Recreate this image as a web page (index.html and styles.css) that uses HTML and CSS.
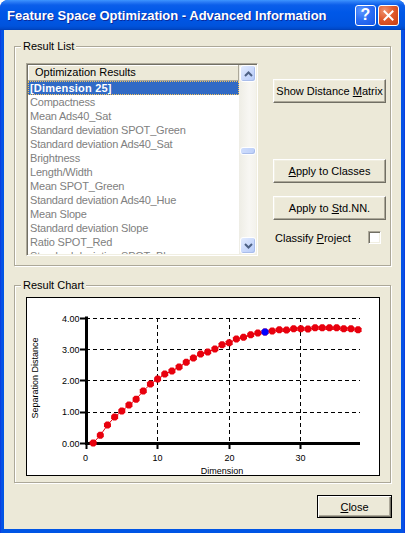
FILE: index.html
```html
<!DOCTYPE html>
<html lang="en">
<head>
<meta charset="utf-8">
<title>Feature Space Optimization - Advanced Information</title>
<link rel="stylesheet" href="styles.css">
</head>
<body>
<div class="window">
  <div class="titlebar">
    <span class="title">Feature Space Optimization - Advanced Information</span>
    <div class="tb-buttons">
      <span class="tb-btn tb-help">?</span>
      <span class="tb-btn tb-close">
        <svg width="11" height="11" viewBox="0 0 11 11"><path d="M1.5 1.5l8 8M9.5 1.5l-8 8" stroke="#fff" stroke-width="2" stroke-linecap="square" fill="none"/></svg>
      </span>
    </div>
  </div>
  <div class="client">
    <div class="group g-list">
      <span class="legend">Result List</span>
      <div class="listbox">
        <div class="lb-main">
          <div class="lb-head">Optimization Results</div>
          <div class="lb-rows">
            <div class="row sel">[Dimension 25]</div>
            <div class="row">Compactness</div>
            <div class="row">Mean Ads40_Sat</div>
            <div class="row">Standard deviation SPOT_Green</div>
            <div class="row">Standard deviation Ads40_Sat</div>
            <div class="row">Brightness</div>
            <div class="row">Length/Width</div>
            <div class="row">Mean SPOT_Green</div>
            <div class="row">Standard deviation Ads40_Hue</div>
            <div class="row">Mean Slope</div>
            <div class="row">Standard deviation Slope</div>
            <div class="row">Ratio SPOT_Red</div>
            <div class="row">Standard deviation SPOT_Blue</div>
          </div>
        </div>
        <div class="vscroll">
          <div class="sb-btn">
            <svg width="9" height="6" viewBox="0 0 9 6"><path d="M1 5l3.5-3.5L8 5" stroke="#4D6185" stroke-width="2" fill="none"/></svg>
          </div>
          <div class="sb-track"><div class="sb-thumb"></div></div>
          <div class="sb-btn">
            <svg width="9" height="6" viewBox="0 0 9 6"><path d="M1 1l3.5 3.5L8 1" stroke="#4D6185" stroke-width="2" fill="none"/></svg>
          </div>
        </div>
      </div>
      <div class="actions">
        <button class="btn">Show Distance <u>M</u>atrix</button>
        <button class="btn b-apply"><u>A</u>pply to Classes</button>
        <button class="btn b-std">Apply to <u>S</u>td.NN.</button>
        <div class="classify">
          <span>Classify <u>P</u>roject</span>
          <span class="checkbox"></span>
        </div>
      </div>
    </div>

    <div class="group g-chart">
      <span class="legend">Result Chart</span>
      <div class="chart">
        <svg width="352" height="177" viewBox="0 0 352 177">
          <defs>
            <marker id="pt" markerUnits="userSpaceOnUse" markerWidth="8" markerHeight="8" viewBox="-4 -4 8 8" refX="0" refY="0">
              <path d="M-1.5-3.5h3l2 2v3l-2 2h-3l-2-2v-3z" fill="#e8000d"/>
            </marker>
          </defs>
          <path class="grid" d="M59 20.5H333M59 51.5H333M59 82.5H333M59 114.5H333M130.5 20V145M202.5 20V145M273.5 20V145"/>
          <path class="axis" d="M59.5 18.5V147M58 145.5H333"/>
          <path class="tick" d="M53 20.5h6M53 51.5h6M53 82.5h6M53 114.5h6M53 145.5h6M59.5 145v6M130.5 145v6M202.5 145v6M273.5 145v6"/>
          <g class="ylab">
            <text x="52.5" y="23.7">4.00</text>
            <text x="52.5" y="54.8">3.00</text>
            <text x="52.5" y="86">2.00</text>
            <text x="52.5" y="117.4">1.00</text>
            <text x="52.5" y="148.6">0.00</text>
          </g>
          <g class="xlab">
            <text x="58.5" y="162.5">0</text>
            <text x="130.5" y="162.5">10</text>
            <text x="202.5" y="162.5">20</text>
            <text x="273.5" y="162.5">30</text>
          </g>
          <text class="atitle" x="195" y="175.5">Dimension</text>
          <text class="atitle" transform="translate(10.7 80) rotate(-90)">Separation Distance</text>
          <polyline class="series" marker-start="url(#pt)" marker-mid="url(#pt)" marker-end="url(#pt)"
            points="66.16,145 73.32,137.2 80.48,127.1 87.64,119 94.8,113.1 101.96,107.1 109.12,101.2 116.28,93 123.44,86.1 130.6,81.1 137.76,76.1 144.92,73 152.08,68.9 159.24,64.2 166.4,59.9 173.56,56.1 180.72,53.9 187.88,51.1 195.04,46.7 202.2,44.8 209.36,41.1 216.52,39.2 223.68,36.7 230.84,35.1 238,33.9 245.16,32.9 252.32,31.7 259.48,32 266.64,30.7 273.8,30.7 280.96,31.1 288.12,29.8 295.28,29.8 302.44,29.8 309.6,29.8 316.76,30.7 323.92,30.7 331.08,31.7"/>
          <path class="current" transform="translate(238 33.9)" d="M-1.5-3.5h3l2 2v3l-2 2h-3l-2-2v-3z"/>
        </svg>
      </div>
    </div>

    <div class="footer">
      <button class="btn btn-default"><u>C</u>lose</button>
    </div>
  </div>
</div>
</body>
</html>
```
FILE: styles.css
```css
* { box-sizing: border-box; }
html, body { margin: 0; padding: 0; }
body {
  width: 405px;
  height: 533px;
  background: #ffffff;
  font-family: "Liberation Sans", Arial, sans-serif;
  font-size: 11px;
  color: #000;
}

.window {
  width: 405px;
  height: 533px;
  display: flex;
  flex-direction: column;
  background: linear-gradient(to right, #0831D9 0, #0A4FE6 1px, #0055E5 3px, #0055E5 401px, #0A4FE6 404px, #0831D9 405px);
  border-radius: 8px 8px 0 0;
  overflow: hidden;
}

/* ---------- title bar ---------- */
.titlebar {
  height: 30px;
  flex: none;
  display: flex;
  align-items: center;
  padding: 0 6px 0 7px;
  background: linear-gradient(to bottom, #3D95FF 0, #2A7BF5 2px, #0B5EEA 5px, #0058E8 12px, #0055E3 20px, #0053DC 26px, #0048C8 29px, #003DB0 30px);
}
.title {
  flex: 1;
  color: #fff;
  font-weight: bold;
  font-size: 13px;
  white-space: nowrap;
  text-shadow: 1px 1px 0 #0A2A9C;
}
.tb-buttons {
  display: flex;
  gap: 2px;
}
.tb-btn {
  width: 21px;
  height: 21px;
  border: 1px solid #fff;
  border-radius: 3px;
  display: flex;
  align-items: center;
  justify-content: center;
  color: #fff;
}
.tb-help {
  background: radial-gradient(circle at 30% 25%, #5E97FF 0, #2D6FF5 45%, #1656E6 100%);
  font-weight: bold;
  font-size: 16px;
  line-height: 1;
}
.tb-close {
  background: radial-gradient(circle at 30% 25%, #F0936F 0, #E05A2C 45%, #C83C10 100%);
}

/* ---------- client area ---------- */
.client {
  flex: 1;
  margin: 0 4px 4px;
  background: #ECE9D8;
  display: flex;
  flex-direction: column;
}

.group {
  position: relative;
  margin: 0 10px;
  border: 1px solid #ACA899;
  box-shadow: 1px 1px 0 #fff, inset 1px 1px 0 #fff;
}
.legend {
  position: absolute;
  top: -7px;
  left: 6px;
  padding: 0 2px;
  line-height: 13px;
  background: #ECE9D8;
  white-space: nowrap;
}

.g-list {
  margin-top: 16px;
  height: 220px;
  display: flex;
  padding: 16px 4px 0 11px;
}

/* ---------- list box ---------- */
.listbox {
  width: 232px;
  height: 193px;
  flex: none;
  display: flex;
  padding: 1px;
  background: #fff;
  border: 1px solid;
  border-color: #ACA899 #fff #fff #ACA899;
  box-shadow: inset 1px 1px 0 #716F64, inset -1px -1px 0 #F1EFE2;
}
.lb-main {
  flex: 1;
  min-width: 0;
  display: flex;
  flex-direction: column;
  overflow: hidden;
}
.lb-head {
  height: 16px;
  flex: none;
  padding-left: 7px;
  line-height: 15px;
  background: #ECE9D8;
  border-right: 1px solid #ACA899;
  border-bottom: 1px solid #ACA899;
  box-shadow: inset 1px 1px 0 #fff;
  white-space: nowrap;
}
.lb-rows {
  flex: 1;
  overflow: hidden;
}
.row {
  height: 14px;
  line-height: 14px;
  padding-left: 2px;
  color: #808080;
  letter-spacing: -0.2px;
  white-space: nowrap;
}
.row.sel {
  background: #316AC5;
  color: #fff;
  font-weight: bold;
  letter-spacing: 0.2px;
  outline: 1px dotted #F2C25C;
  outline-offset: -1px;
}

/* ---------- scrollbar ---------- */
.vscroll {
  width: 17px;
  flex: none;
  display: flex;
  flex-direction: column;
  background: linear-gradient(to right, #EEEDE5, #F8F7F3 60%, #F3F2EC);
}
.sb-btn {
  height: 17px;
  flex: none;
  margin: 0 0 0 1px;
  display: flex;
  align-items: center;
  justify-content: center;
  border: 1px solid #fff;
  border-radius: 3px;
  background: linear-gradient(135deg, #E3ECFE 0, #CBDAFC 50%, #B6CBF8 100%);
  box-shadow: inset -1px -1px 0 #A9BDEB;
}
.sb-track {
  flex: 1;
}
.sb-thumb {
  margin: 65px 0 0 1px;
  height: 8px;
  border: 1px solid #fff;
  border-radius: 3px;
  background: linear-gradient(to right, #CFDDFC, #BDD0FA);
  box-shadow: inset -1px -1px 0 #A9BDEB;
}

/* ---------- buttons ---------- */
.actions {
  width: 113px;
  flex: none;
  margin-left: 15px;
  padding-top: 16px;
  display: flex;
  flex-direction: column;
}
.btn {
  height: 24px;
  padding: 0;
  font-family: "Liberation Sans", Arial, sans-serif;
  font-size: 11px;
  color: #000;
  background: #ECE9D8;
  border: 1px solid;
  border-color: #fff #716F64 #716F64 #fff;
  box-shadow: inset -1px -1px 0 #ACA899, inset 1px 1px 0 #F1EFE2;
  border-radius: 0;
  white-space: nowrap;
}
.b-apply { margin-top: 56px; }
.b-std { margin-top: 13px; }
.classify {
  margin-top: 11px;
  height: 13px;
  display: flex;
  align-items: center;
  justify-content: space-between;
  padding: 0 5px 0 2px;
}
.checkbox {
  width: 13px;
  height: 13px;
  background: #fff;
  border: 1px solid;
  border-color: #ACA899 #fff #fff #ACA899;
  box-shadow: inset 1px 1px 0 #716F64, inset -1px -1px 0 #F1EFE2;
}

/* ---------- chart ---------- */
.g-chart {
  margin-top: 19px;
  height: 198px;
  padding: 11px 0 0 11px;
}
.chart {
  width: 354px;
  height: 179px;
  border: 1px solid #000;
  background: #fff;
}
.chart svg { display: block; }
.grid { stroke: #000; stroke-width: 1; stroke-dasharray: 4 3; fill: none; }
.axis { stroke: #000; stroke-width: 3; fill: none; }
.tick { stroke: #000; stroke-width: 2; fill: none; }
.ylab text { font-size: 9px; text-anchor: end; font-family: "Liberation Sans", Arial, sans-serif; }
.xlab text { font-size: 9px; text-anchor: middle; font-family: "Liberation Sans", Arial, sans-serif; }
.atitle { font-size: 9px; text-anchor: middle; font-family: "Liberation Sans", Arial, sans-serif; }
.series { fill: none; stroke: #e8000d; stroke-width: 1; }
.current { fill: #0000ff; }

/* ---------- footer ---------- */
.footer {
  display: flex;
  justify-content: flex-end;
  padding: 12px 9px 0 0;
}
.btn-default {
  width: 75px;
  height: 23px;
  border: 1px solid #000;
  box-shadow: inset 1px 1px 0 #fff, inset -1px -1px 0 #716F64, inset -2px -2px 0 #ACA899;
}
```
